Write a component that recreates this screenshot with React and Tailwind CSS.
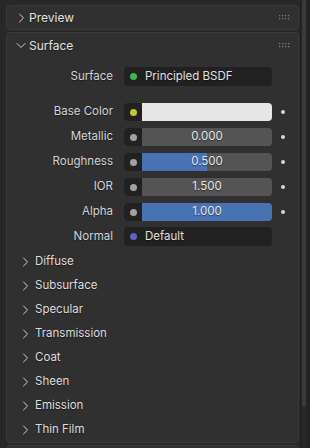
const font = { fontFamily: 'Inter, "Noto Sans", sans-serif' };

function ChevRight() {
  return (
    <svg width="7" height="10" viewBox="0 0 7 10" className="shrink-0">
      <polyline points="1.5,1 5.5,5 1.5,9" fill="none" stroke="#cccccc" strokeWidth="1" strokeLinecap="round" strokeLinejoin="round" />
    </svg>
  );
}

function ChevDown() {
  return (
    <svg width="10" height="7" viewBox="0 0 10 7" className="shrink-0">
      <polyline points="1,1.5 5,5.5 9,1.5" fill="none" stroke="#cccccc" strokeWidth="1" strokeLinecap="round" strokeLinejoin="round" />
    </svg>
  );
}

function Grip() {
  return (
    <svg width="11" height="5" viewBox="0 0 11 5" className="shrink-0">
      {[0, 3, 6, 9].map(x =>
        [0, 3].map(y => <rect key={`${x}-${y}`} x={x} y={y} width="1.3" height="1.3" fill="#7c7c7c" />)
      )}
    </svg>
  );
}

function Socket({ color }) {
  return (
    <div className="w-[18px] h-full flex items-center justify-center bg-[#212121] rounded-l-[4px] shrink-0">
      <div className="w-[7px] h-[7px] rounded-full" style={{ background: color }} />
    </div>
  );
}

function Label({ children }) {
  return <div className="w-[107px] text-right text-[11.5px] text-[#d4d4d4] shrink-0 pr-[1px]">{children}</div>;
}

function KeyDot() {
  return (
    <div className="w-[22px] flex justify-center shrink-0">
      <div className="w-[4px] h-[4px] rounded-full bg-[#d6d6d6]" />
    </div>
  );
}

function ValueRow({ label, value, fill, white }) {
  return (
    <div className="flex items-center h-[18px] mt-[7px]">
      <Label>{label}</Label>
      <div className="ml-[10px] w-[148px] h-full flex rounded-[4px] overflow-hidden">
        <Socket color={label === 'Base Color' ? '#c7c729' : '#a1a1a1'} />
        {white ? (
          <div className="flex-1 bg-[#e6e6e6]" />
        ) : (
          <div className="flex-1 relative bg-[#545454] flex items-center justify-center">
            {fill > 0 && (
              <div className="absolute left-0 top-0 bottom-0 bg-[#4772b3]" style={{ width: `${fill * 100}%` }} />
            )}
            <span className="relative text-[11.5px] text-[#e6e6e6]">{value}</span>
          </div>
        )}
      </div>
      <KeyDot />
    </div>
  );
}

function LinkRow({ label, color, text, className }) {
  return (
    <div className={`flex items-center h-[19px] ${className}`}>
      <Label>{label}</Label>
      <div className="ml-[10px] w-[148px] h-full flex items-center rounded-[4px] bg-[#212121]">
        <div className="w-[18px] flex justify-center">
          <div className="w-[7px] h-[7px] rounded-full" style={{ background: color }} />
        </div>
        <span className="ml-[3px] text-[11.5px] text-[#e0e0e0]">{text}</span>
      </div>
    </div>
  );
}

const subpanels = ['Diffuse', 'Subsurface', 'Specular', 'Transmission', 'Coat', 'Sheen', 'Emission', 'Thin Film'];

export default function App() {
  return (
    <div className="w-[310px] h-[448px] bg-[#282828] flex overflow-hidden [text-shadow:0_1px_1px_rgba(0,0,0,0.45)]" style={font}>
      <div className="w-[300px] pl-[6px] pr-[1px] pt-[5px] flex flex-col gap-[2px]">
        <div className="h-[25px] rounded-[4px] bg-[#303030] border border-[#3a3a3a] flex items-center pl-[9px] pr-[8px] shrink-0">
          <div className="w-[10px] flex justify-center"><ChevRight /></div>
          <span className="ml-[3px] text-[12px] text-[#e4e4e4]">Preview</span>
          <div className="flex-1" />
          <Grip />
        </div>
        <div className="h-[411px] rounded-[4px] bg-[#303030] border border-[#3a3a3a] flex flex-col shrink-0">
          <div className="h-[25px] flex items-center pl-[9px] pr-[8px] shrink-0">
            <div className="w-[10px] flex justify-center"><ChevDown /></div>
            <span className="ml-[3px] text-[12px] text-[#e4e4e4]">Surface</span>
            <div className="flex-1" />
            <Grip />
          </div>
          <LinkRow label="Surface" color="#3fb84a" text="Principled BSDF" className="mt-[9px]" />
          <div className="h-[10px]" />
          <ValueRow label="Base Color" white />
          <ValueRow label="Metallic" value="0.000" fill={0} />
          <ValueRow label="Roughness" value="0.500" fill={0.5} />
          <ValueRow label="IOR" value="1.500" fill={0} />
          <ValueRow label="Alpha" value="1.000" fill={1} />
          <LinkRow label="Normal" color="#6363c7" text="Default" className="mt-[6px]" />
          <div className="mt-[4px] flex flex-col">
            {subpanels.map(name => (
              <div key={name} className="h-[24px] flex items-center pl-[15px]">
                <ChevRight />
                <span className="ml-[6px] text-[11.5px] text-[#dedede]">{name}</span>
              </div>
            ))}
          </div>
        </div>
        <div className="h-[10px] rounded-t-[4px] bg-[#303030] border border-[#3a3a3a] shrink-0" />
      </div>
      <div className="w-[10px] flex">
        <div className="w-[2px] bg-[#232323]" />
        <div className="w-[4px] flex flex-col">
          <div className="h-[407px] bg-[#3a3a3a] rounded-b-[2px]" />
        </div>
        <div className="flex-1 bg-[#242424]" />
      </div>
    </div>
  );
}
